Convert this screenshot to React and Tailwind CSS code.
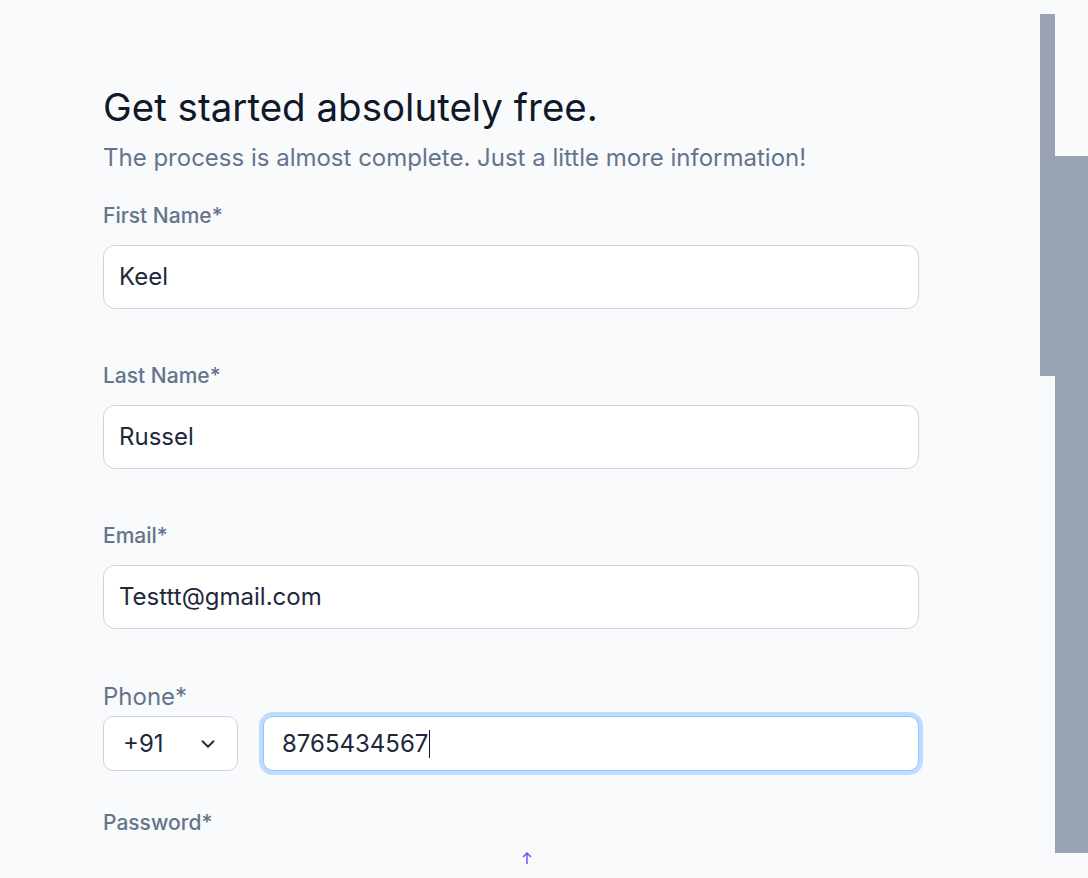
import React from "react";

const Field = ({ label, value, className = "" }) => (
  <div className={"flex flex-col " + className}>
    <label className="text-[21px] font-medium leading-[28px] text-[#64748b]">
      {label}
    </label>
    <div className="mt-[15px] flex h-[64px] w-[816px] items-center rounded-[12px] border border-[#cbd5e1] bg-white px-[15px] text-[24px] text-[#1e293b]">
      {value}
    </div>
  </div>
);

const App = () => {
  return (
    <div
      className="relative h-[878px] w-[1088px] overflow-hidden bg-[#f8fafc]"
      style={{ fontFamily: "Inter, 'Noto Sans', sans-serif" }}>
      <div className="absolute left-[1040px] top-[14px] h-[362px] w-[15px] bg-[#99a2b2]" />
      <div className="absolute left-[1055px] top-[156px] h-[697px] w-[33px] bg-[#99a2b2]" />

      <div className="flex flex-col pl-[103px] pt-[83px]">
        <h1 className="text-[38.5px] leading-[48px] font-normal text-[#111827]">
          Get started absolutely free.
        </h1>
        <p className="mt-[11px] text-[24px] leading-[32px] text-[#64748b]">
          The process is almost complete. Just a little more information!
        </p>

        <div className="mt-[28px] flex flex-col gap-[53px]">
          <Field label="First Name*" value="Keel" />
          <Field label="Last Name*" value="Russel" />
          <Field label="Email*" value="Testtt@gmail.com" />
        </div>

        <div className="mt-[52px] flex flex-col">
          <label className="text-[24px] leading-[32px] text-[#64748b]">Phone*</label>
          <div className="mt-[3px] flex w-[816px] gap-[25px]">
            <div className="flex h-[55px] w-[135px] items-center justify-between rounded-[10px] border border-[#cbd5e1] bg-white pl-[19px] pr-[18px] text-[24px] text-[#1e293b]">
              <span>+91</span>
              <svg width="22" height="22" viewBox="0 0 24 24" fill="none" stroke="#1e293b" strokeWidth="2" strokeLinecap="round" strokeLinejoin="round">
                <path d="M6 9l6 6 6-6" />
              </svg>
            </div>
            <div className="flex h-[55px] flex-1 items-center rounded-[10px] border border-[#93c5fd] bg-white px-[18px] text-[24px] text-[#1e293b] ring-4 ring-[#bfdbfe]">
              <span>8765434567</span>
              <span className="ml-[1px] h-[28px] w-[1px] bg-[#111827]" />
            </div>
          </div>
        </div>

        <label className="mt-[38px] text-[21px] font-medium leading-[28px] text-[#64748b]">
          Password*
        </label>
        <div className="ml-[418px] mt-[14px]">
          <svg width="12" height="14" viewBox="0 0 12 14" fill="none" stroke="#6d4cf0" strokeWidth="1.4">
            <path d="M6 13V2M2 6l4-4 4 4" />
          </svg>
        </div>
      </div>
    </div>
  );
};

export default App;
